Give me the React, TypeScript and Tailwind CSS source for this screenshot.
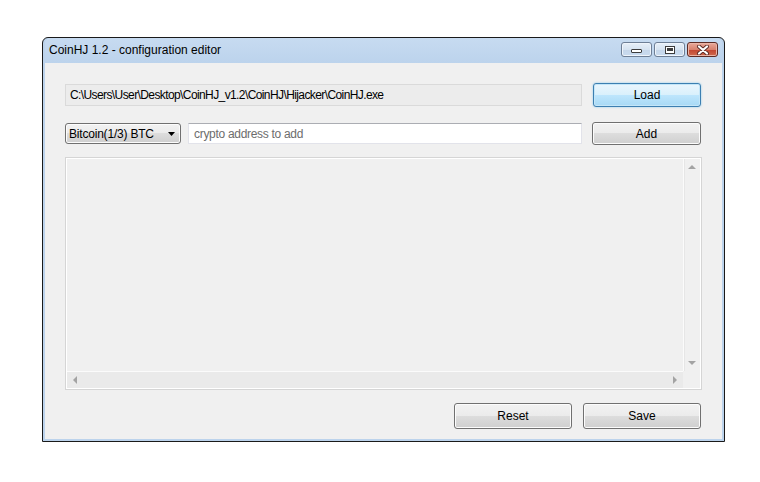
import React from "react";

const btn =
  "border border-[#707070] rounded-[3px] bg-[linear-gradient(#f2f2f2_0%,#ebebeb_50%,#dddddd_50%,#cfcfcf_100%)] shadow-[inset_0_0_0_1px_#fcfcfc] text-[12px] text-black flex items-center justify-center";

function Arrow({ dir }: { dir: "up" | "down" | "left" | "right" }) {
  const pts = {
    up: "0,4 4,0 8,4",
    down: "0,0 8,0 4,4",
    left: "4,0 4,8 0,4",
    right: "0,0 0,8 4,4",
  }[dir];
  const vertical = dir === "up" || dir === "down";
  return (
    <svg width={vertical ? 8 : 4} height={vertical ? 4 : 8} viewBox={vertical ? "0 0 8 4" : "0 0 4 8"}>
      <polygon points={pts} fill="#a3a3a3" />
    </svg>
  );
}

function TitleButtons() {
  return (
    <div className="flex gap-[2px] mt-[4px] mr-[4px]">
      <div className="w-[31px] h-[15px] rounded-[3px] border border-[#6e7f96] bg-[linear-gradient(#e7eff8_0%,#d6e3f1_50%,#c5d6ea_50%,#c9dbef_100%)] shadow-[inset_0_0_0_1px_#eef4fb] flex items-end justify-center pb-[3px]">
        <div className="w-[11px] h-[4px] border border-[#3c3c3c] bg-white rounded-[1px]" />
      </div>
      <div className="w-[31px] h-[15px] rounded-[3px] border border-[#6e7f96] bg-[linear-gradient(#e7eff8_0%,#d6e3f1_50%,#c5d6ea_50%,#c9dbef_100%)] shadow-[inset_0_0_0_1px_#eef4fb] flex items-center justify-center">
        <div className="w-[10px] h-[8px] border border-[#3c3c3c] bg-white flex items-center justify-center">
          <div className="w-[6px] h-[3px] border border-[#3c3c3c] border-t-2" />
        </div>
      </div>
      <div className="w-[31px] h-[15px] rounded-[3px] border border-[#5d2b25] bg-[linear-gradient(#e9a99a_0%,#d8826f_50%,#c2442f_50%,#cf6a4f_100%)] shadow-[inset_0_0_0_1px_#eab4a6] flex items-center justify-center">
        <svg width="14" height="10" viewBox="0 0 14 10">
          <path d="M3 1.5 L11 8.5 M11 1.5 L3 8.5" stroke="#5a2a25" strokeWidth="4" strokeLinecap="round" />
          <path d="M3 1.5 L11 8.5 M11 1.5 L3 8.5" stroke="#ffffff" strokeWidth="2.2" strokeLinecap="round" />
        </svg>
      </div>
    </div>
  );
}

export default function App() {
  return (
    <div className="w-[760px] h-[482px] bg-white pt-[37px] pl-[42px] font-['Liberation_Sans',Arial,sans-serif]">
      <div className="w-[683px] h-[405px] border border-[#1a1a1a] rounded-t-[6px] bg-[#bcd3ec] flex flex-col px-[2px] pb-[2px]">
        {/* title bar */}
        <div className="h-[25px] flex justify-between bg-[linear-gradient(#c7dbf1,#bcd3ec)] rounded-t-[5px]">
          <div className="pl-[4px] pt-[5px] text-[12px] text-black leading-[15px]">
            CoinHJ 1.2 - configuration editor
          </div>
          <TitleButtons />
        </div>

        {/* client area */}
        <div className="flex-1 bg-[#f0f0f0] flex flex-col pl-[20px] pr-[21px] pt-[20px] text-[12px]">
          <div className="flex items-center h-[24px]">
            <div className="w-[517px] h-[22px] border border-[#dadada] bg-[#ececec] flex items-center pl-[4px] text-black tracking-[-0.6px]">
              C:\Users\User\Desktop\CoinHJ_v1.2\CoinHJ\Hijacker\CoinHJ.exe
            </div>
            <div className="ml-auto w-[108px] h-[24px] border border-[#3c7fb1] rounded-[3px] bg-[linear-gradient(#eaf6fd_0%,#d9f0fc_50%,#bee6fd_50%,#a7d9f5_100%)] shadow-[inset_0_0_0_1px_#c4e6f8,0_0_2px_#7ec4ec] flex items-center justify-center text-black">
              Load
            </div>
          </div>

          <div className="flex items-center h-[23px] mt-[15px]">
            <div className="w-[116px] h-[21px] border border-[#707070] rounded-[3px] bg-[linear-gradient(#f2f2f2_0%,#ebebeb_50%,#dddddd_50%,#cfcfcf_100%)] shadow-[inset_0_0_0_1px_#fcfcfc] flex items-center pl-[3px] pr-[5px] text-black">
              <span className="flex-1 tracking-[-0.2px]">Bitcoin(1/3) BTC</span>
              <svg width="7" height="4" viewBox="0 0 7 4">
                <polygon points="0,0 7,0 3.5,4" fill="#000" />
              </svg>
            </div>
            <div className="ml-[7px] w-[394px] h-[21px] border border-[#e2e3ea] border-t-[#abadb3] bg-white flex items-center pl-[5px] text-[#6d6d6d] tracking-[-0.3px]">
              crypto address to add
            </div>
            <div className={`ml-auto w-[109px] h-[23px] ${btn}`}>Add</div>
          </div>

          {/* list box */}
          <div className="mt-[12px] w-[637px] h-[233px] border border-[#d5d5d5] shadow-[inset_0_0_0_1px_#ffffff] flex flex-col p-[1px]">
            <div className="flex flex-1">
              <div className="flex-1 bg-[#f0f0f0]" />
              <div className="w-[17px] bg-[#f0f0f0] border-l border-[#fbfbfb] flex flex-col items-center justify-between py-[6px] shadow-[inset_1px_0_0_#e6e6e6]">
                <Arrow dir="up" />
                <Arrow dir="down" />
              </div>
            </div>
            <div className="flex h-[17px]">
              <div className="flex-1 bg-[#eaeaea] border-t border-[#fbfbfb] flex items-center justify-between px-[6px]">
                <Arrow dir="left" />
                <Arrow dir="right" />
              </div>
              <div className="w-[17px] bg-[#f0f0f0]" />
            </div>
          </div>

          <div className="flex justify-end mt-[13px] gap-[11px]">
            <div className={`w-[118px] h-[26px] ${btn}`}>Reset</div>
            <div className={`w-[118px] h-[26px] ${btn}`}>Save</div>
          </div>
        </div>
      </div>
    </div>
  );
}
